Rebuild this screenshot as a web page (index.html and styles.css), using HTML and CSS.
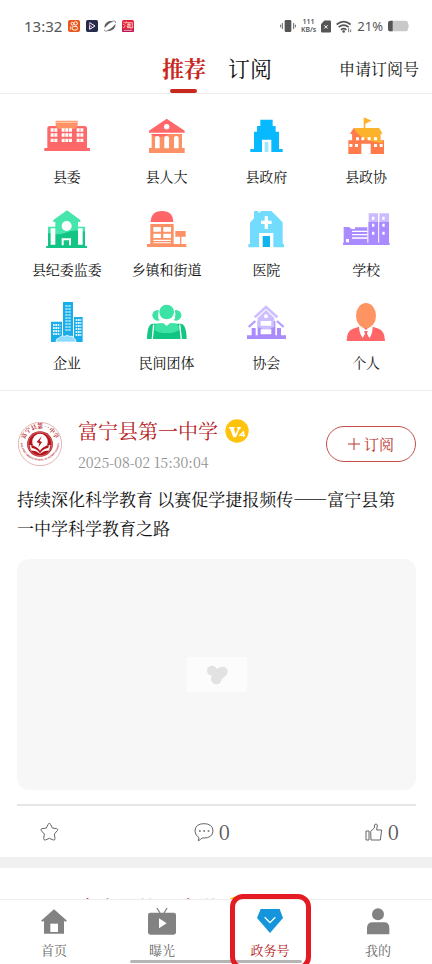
FILE: index.html
```html
<!DOCTYPE html>
<html lang="zh-CN">
<head>
<meta charset="utf-8">
<meta name="viewport" content="width=device-width, initial-scale=1">
<title>政务号</title>
<link rel="stylesheet" href="styles.css">
</head>
<body>
<div class="app">
  <div class="status">
    <div class="status-side">
      <span class="clock">13:32</span>
      <svg class="app-icon" viewBox="0 0 36 36"><rect width="36" height="36" rx="6" fill="#e9561c"/><g fill="none" stroke="#fff" stroke-width="3"><circle cx="13" cy="11" r="4"/><circle cx="23" cy="10" r="5"/><rect x="13" y="19" width="15" height="11" rx="4"/><path d="M11 22l-4-2v8l4-2" stroke-width="2"/></g></svg>
      <svg class="app-icon" viewBox="0 0 36 36"><rect width="36" height="36" rx="5" fill="#262a4d"/><path d="M11 16v12l16-10L11 8" fill="none" stroke="#fff" stroke-width="3"/><path d="M11 7v9l7 4" fill="none" stroke="#e991b5" stroke-width="3"/></svg>
      <svg class="app-icon" viewBox="0 0 36 36"><path d="M2 24C-1 10 16-1 27 5 18 7 9 15 2 24zM34 12c3 14-14 25-25 19 9-2 18-10 25-19z" fill="#5d5d5d"/><path d="M2 29C-1 35 9 34 14 31M22 6c8-5 15-4 12 3" fill="none" stroke="#5d5d5d" stroke-width="2"/></svg>
      <svg class="app-icon" viewBox="0 0 36 36"><rect width="36" height="36" rx="5" fill="#e32337"/><rect y="27" width="36" height="9" rx="4" fill="#bd164c"/><path d="M4 5l4 4M3 12l5 3M4 24l6-7M13 4l-3 7M12 8h19v16h-7M15 13h12M14 18h14M21 9v14M16 18v5h10M5 31h26" fill="none" stroke="#fff" stroke-width="2"/></svg>
    </div>
    <div class="status-side">
      <svg width="16" height="14" viewBox="0 0 48 42"><rect x="14" y="3" width="20" height="36" rx="4" fill="#555"/><path d="M7 12v18M2 17v8M41 12v18M46 17v8" stroke="#666" stroke-width="3"/></svg>
      <span class="speed"><span>111</span><span>KB/s</span></span>
      <svg width="10" height="13" viewBox="0 0 30 38"><path d="M10 1h16q4 0 4 4v28q0 4-4 4H4q-4 0-4-4V12z" fill="#555"/><path d="M10 15l10 10M20 15L10 25" stroke="#fff" stroke-width="3"/></svg>
      <svg width="16" height="13" viewBox="0 0 48 38"><g fill="none" stroke="#555" stroke-width="5"><path d="M2 13q21-17 42 0M8 21q15-12 30 0M15 29q8-7 16 0"/></g><circle cx="23" cy="34" r="4" fill="#555"/><path d="M38 24v12M44 28v8" stroke="#777" stroke-width="3"/></svg>
      <span class="percent">21%</span>
      <svg width="22" height="12" viewBox="0 0 66 36"><rect y="2" width="60" height="32" rx="8" fill="#c9c9c9"/><path d="M14 2v32H8q-8 0-8-8V10q0-8 8-8z" fill="#555"/><path d="M61 10q5 8 0 16z" fill="#c9c9c9"/></svg>
    </div>
  </div>

  <header class="top">
    <nav class="tabs">
      <a class="tab tab-on" href="#recommend">推荐</a>
      <a class="tab" href="#subscribed">订阅</a>
    </nav>
    <a class="apply" href="#apply">申请订阅号</a>
  </header>

  <main class="content">
    <nav class="cats">
      <a class="cat" href="#c1"><svg viewBox="51 24 180 144"><path d="M73 129h9V70q0-7 8-7h103q8 0 8 7v59h9v9H73z" fill="#ff6868"/><path d="M107 47h66v13q-2 13-20 13h-26q-18 0-20-13z" fill="#ff9367"/><path d="M108 52h64" stroke="#ffd0b0" stroke-width="3"/><path d="M92 75h20M125 75h31M170 75h20M92 90h20M125 90h31M170 90h20M92 106h20M125 106h31M170 106h20" stroke="#fff" stroke-width="10" stroke-dasharray="9 2"/></svg><span>县委</span></a>
      <a class="cat" href="#c2"><svg viewBox="351 24 180 144"><path d="M395 87h91v42h8v15H387v-15h8z" fill="#fb9164"/><path d="M387 83v-6l53-36 54 36v6z" fill="#ff6868"/><path d="M395 87h52q-10 8-26 8-17 0-26-5z" fill="#ff6868"/><circle cx="440" cy="65" r="8" fill="#fff"/><path d="M405 130V98q0-5 7-5t7 5v32zM433 130V98q0-5 7-5t7 5v32zM462 130V98q0-5 7-5t7 5v32z" fill="#fff"/></svg><span>县人大</span></a>
      <a class="cat" href="#c3"><svg viewBox="48 24 180 144"><path d="M121 44h37v19h9v17h10v52h11v9h-34v-37h-28v37H91v-9h11V80h9V63h10z" fill="#08b9ff"/><path d="M134 111h11v30h-11z" fill="#9be6ff"/></svg><span>县政府</span></a>
      <a class="cat" href="#c4"><svg viewBox="348 24 180 144"><path d="M397 84v22h-12v41h39v-31h28v31h40v-41h-12V84z" fill="#ff7b4c"/><path d="M391 86l12-17h74l11 17h-6v20q6 4 10 9-27-3-48-9-28-8-42-27l-5 7z" fill="#fcb32b"/><path d="M390 86l11-17q16 28 45 37h-49V86z" fill="#ff7b4c"/><path d="M431 70V38h4l20 9-19 9v14z" fill="#fcb32b"/><g fill="#fff"><path d="M408 97h9v9h-9zM424 97h9v9h-9zM443 97h9v9h-9zM462 97h9v9h-9zM388 117h9v9h-9zM405 117h9v9h-9zM462 117h9v9h-9zM479 117h9v9h-9z"/></g></svg><span>县政协</span></a>

      <a class="cat" href="#c5"><svg viewBox="51 18 180 144"><path d="M84 80h22V66h-6v-6l41-29 40 29v6h-7v14h21v58h6v6H79v-6h5z" fill="#46e5ac"/><path d="M84 99q25 8 51 0 28-12 60-4v43h6v6H79v-6h5z" fill="#13c584"/><path d="M92 85h14v49H92zM174 85h14v49h-14z" fill="#fff"/><circle cx="140" cy="78" r="15" fill="#fff"/><path d="M128 136v-18h22v18" fill="none" stroke="#fff" stroke-width="6"/></svg><span>县纪委监委</span></a>
      <a class="cat" href="#c6"><svg viewBox="351 18 180 144"><path d="M392 66q1-33 34-33t34 33z" fill="#ff6668"/><path d="M391 72h70v60h19v-22h-14V93h31v17h-13v22h15v9H381v-9h10z" fill="#fb9164"/><path d="M400 81h23v14h-23zM430 81h23v14h-23zM400 101h23v13h-23zM430 101h23v13h-23zM400 119h53v4h-53zM400 127h53v3h-53z" fill="#fff"/></svg><span>乡镇和街道</span></a>
      <a class="cat" href="#c7"><svg viewBox="48 18 180 144"><path d="M102 33h13v7l10-7h29l34 34v65h4v10h-32V99h-43v43H85v-10h5V68l12-13z" fill="#72dcff"/><path d="M139 49v38M123 67h32" stroke="#fff" stroke-width="10"/><path d="M128 108h22v33h-22z" fill="#13b4ed"/></svg><span>医院</span></a>
      <a class="cat" href="#c8"><svg viewBox="348 18 180 144"><path d="M371 81h16l8 6h10v-5h37v46h3V66h62v62h2v7H369v-7h2z" fill="#a98bff"/><path d="M446 40h29v26h-29zM478 40h29v26h-29z" fill="#ccbcff"/><path d="M476 40v88" stroke="#fff" stroke-width="3"/><path d="M396 94h46M396 104h46M396 114h46" stroke="#fff" stroke-width="4"/><path d="M378 117h9v10h-9zM456 50h7v9h-7zM487 50h7v9h-7zM456 71h7v9h-7zM487 71h7v9h-7zM456 95h7v9h-7zM487 95h7v9h-7z" fill="#fff"/></svg><span>学校</span></a>

      <a class="cat" href="#c9"><svg viewBox="51 27 180 144"><path d="M93 95h33v61H93zM129 36h30v120h-30zM162 81h26v75h-26z" fill="#18aeea"/><path d="M99 105h22M99 114h22M99 123h22M99 132h22M167 90h17M167 99h17M167 108h17M167 117h17M167 126h17M167 135h17" stroke="#e6f9ff" stroke-width="6" stroke-dasharray="5 2"/><path d="M136 48h16M136 57h16M136 66h16M136 75h16M136 84h16M136 93h16M136 102h16M136 111h16M136 120h16" stroke="#b9edff" stroke-width="5" stroke-dasharray="7 2"/><path d="M108 156q-1-12 10-12 5-9 16-5 7-6 15 0 11-3 12 6 8 2 7 11z" fill="#8ddcff" stroke="#fff" stroke-width="2"/></svg><span>企业</span></a>
      <a class="cat" href="#c10"><svg viewBox="351 27 180 144"><circle cx="413" cy="76" r="16" fill="#3de2a5"/><circle cx="468" cy="76" r="16" fill="#3de2a5"/><path d="M381 147q1-45 17-46h84q17 1 18 46z" fill="#12c583"/><path d="M403 119q0-19 16-19h43q15 0 15 19-9 10-37 10t-37-10z" fill="#3de2a5"/><path d="M415 70q0-27 25-27t26 27l-1 16-25 22-25-22z" fill="#fff"/><circle cx="440" cy="66" r="22" fill="#3de2a5"/><path d="M429 91q11 6 23 0l-12 15z" fill="#fff"/><path d="M401 104l-4 43M479 104l5 43" stroke="#fff" stroke-width="4"/></svg><span>民间团体</span></a>
      <a class="cat" href="#c11"><svg viewBox="48 27 180 144"><path d="M81 136h14v-22h12v22h6V93h53v43h5v-22h12v22h15v11H81z" fill="#a98bff"/><path d="M113 84l25-24 25 24v26q-25 16-50 0z" fill="#cdbeff"/><path d="M104 82l34-31 34 31" fill="none" stroke="#cdbeff" stroke-width="8"/><path d="M86 111l20-18M171 93l20 18" stroke="#b69dff" stroke-width="7"/><circle cx="138" cy="79" r="6" fill="#fff"/><path d="M122 93h32v14h-32zM122 118h32v15h-32z" fill="#fff"/></svg><span>协会</span></a>
      <a class="cat" href="#c12"><svg viewBox="348 27 180 144"><path d="M380 153q0-31 19-37l18-6h41l18 6q18 6 19 37z" fill="#ff6668"/><path d="M417 109l6-3 15 14 14-14 6 3q0 24-10 35l-10-17-10 17q-11-15-11-35z" fill="#fff"/><path d="M432 123h11l-2 8 4 13-7 8-7-8 4-13z" fill="#ff6668"/><ellipse cx="438" cy="77" rx="30" ry="38" fill="#ff9463"/></svg><span>个人</span></a>
    </nav>

    <article class="post">
      <div class="author">
        <svg class="avatar" viewBox="0 0 130 130"><defs><path id="arc-top" d="M24 88A47 47 0 1 1 106 88"/><path id="arc-low" d="M7 56A58 58 0 0 0 123 56"/></defs><circle cx="65" cy="65" r="64" fill="none" stroke="#b5232a" stroke-width="1"/><circle cx="65" cy="65" r="38" fill="#b5151c"/><circle cx="65" cy="65" r="35" fill="none" stroke="#fff" stroke-width="1"/><circle cx="65" cy="58" r="23" fill="#fff"/><path d="M34 68q19 1 31 13 12-12 31-13l-4 16q-16 0-27 10-11-10-27-10z" fill="#fff"/><path d="M38 69q17 2 27 16 10-14 27-16l-3 8q-13 1-24 15-11-14-24-15z" fill="#b5151c"/><path d="M70 42L55 59l8 4-3 12 11-16-7-3z" fill="#b5151c"/><text class="seal-cn"><textPath href="#arc-top" startOffset="50%">富宁县第一中学</textPath></text><text class="seal-en"><textPath href="#arc-low" startOffset="50%">THE FIRST MIDDLE SCHOOL OF FUNING COUNTY</textPath></text></svg>
        <div class="who">
          <h2 class="name">富宁县第一中学 <svg class="badge" viewBox="0 0 72 72"><circle cx="36" cy="36" r="35" fill="#ffc20d"/><path d="M12 24h17v4l-3 1 6 16 7-16-3-1v-4h12v4l-4 1-11 26h-8L15 29l-3-1z" fill="#fff"/><path d="M56 37v17M57 37L45 49h15" fill="none" stroke="#fff" stroke-width="4"/></svg></h2>
          <time class="date">2025-08-02 15:30:04</time>
        </div>
        <button class="follow" type="button"><svg width="12" height="12" viewBox="0 0 12 12"><path d="M6 0v12M0 6h12" stroke="#b8332e"/></svg>订阅</button>
      </div>
      <p class="title">持续深化科学教育 以赛促学捷报频传——富宁县第一中学科学教育之路</p>
      <div class="media"><svg width="60" height="35" viewBox="0 0 180 105"><rect width="180" height="105" fill="#fcfcfc"/><g fill="#e2e2e2"><circle cx="75" cy="41" r="15"/><circle cx="107" cy="44" r="15"/><circle cx="88" cy="66" r="16"/><path d="M78 30l10 6 15-6 12 26-12 12-26-6z"/></g></svg></div>
      <div class="actions">
        <button class="act" type="button" aria-label="收藏"><svg width="19" height="20" viewBox="0 0 57 60"><path d="M28 4q3 0 4 4l5 10 13 2q6 2 2 6l-9 10 2 14q0 5-5 4l-12-5-12 5q-5 1-5-4l2-14-9-10q-4-4 2-6l13-2 5-10q1-4 4-4z"/></svg></button>
        <button class="act" type="button" aria-label="评论"><svg width="20" height="20" viewBox="0 0 60 60"><path d="M15 47Q3 40 3 27 4 5 30 5t27 22q-2 21-27 21h-6q-4 6-11 8z"/><path d="M15 27h5M28 27h5M41 27h5" stroke-width="5"/></svg><span>0</span></button>
        <button class="act" type="button" aria-label="点赞"><svg width="18" height="20" viewBox="0 0 54 60"><path d="M3 27h9v27H3zM17 28l11-10 1-10q6-5 8 1l-2 15h15l-4 30H18z"/></svg><span>0</span></button>
      </div>
    </article>

    <article class="post">
      <div class="author">
        <svg class="avatar" viewBox="0 0 130 130"><circle cx="65" cy="65" r="64" fill="none" stroke="#b5232a"/></svg>
        <div class="who">
          <h2 class="name">富宁县第一中学 <svg class="badge" viewBox="0 0 72 72"><circle cx="36" cy="36" r="35" fill="#ffc20d"/></svg></h2>
        </div>
      </div>
    </article>
  </main>

  <nav class="bottom">
    <a class="item" href="#home"><svg viewBox="0 0 90 84"><path d="M6 41L45 7l39 34-5 3-4-3v39H15V41l-4 3z" fill="#828282"/><path d="M34 50h23v25H34z" fill="#fff"/></svg><span>首页</span></a>
    <a class="item" href="#expose"><svg viewBox="0 0 90 84"><rect x="3" y="17" width="84" height="66" rx="7" fill="#828282"/><path d="M39 18L30 3M51 18l9-15" stroke="#828282" stroke-width="4"/><path d="M36 34v30l23-15z" fill="#fff"/></svg><span>曝光</span></a>
    <a class="item item-on" href="#gov"><svg viewBox="0 0 90 84"><path d="M17 6h57l10 27-39 45L6 33z" fill="#1595dc"/><path d="M29 31l16 16 16-16" fill="none" stroke="#fff" stroke-width="4"/></svg><span>政务号</span></a>
    <a class="item" href="#me"><svg viewBox="0 0 90 84"><circle cx="45" cy="22" r="18" fill="#828282"/><path d="M12 82V63q0-17 17-17h34q16 0 16 17v19z" fill="#828282"/></svg><span>我的</span></a>
    <div class="grip"></div>
    <div class="mark"></div>
  </nav>
</div>
</body>
</html>
```

FILE: styles.css
```css
* { box-sizing: border-box; }
body {
  margin: 0;
  background: #fff;
  color: #111;
  font-family: "Noto Serif CJK SC", "Noto Serif SC", "Source Han Serif SC", "Liberation Serif", "Noto Sans CJK SC", serif;
}
a { color: inherit; text-decoration: none; }
button { font: inherit; color: inherit; background: none; border: 0; padding: 0; }
svg { display: block; flex: none; }

.app { height: 100vh; display: flex; flex-direction: column; overflow: hidden; }

.status {
  flex: none;
  height: 48px;
  padding: 4px 22px 0 24px;
  display: flex;
  justify-content: space-between;
  align-items: center;
  font-family: "Noto Sans", sans-serif;
  color: #555;
}
.status-side { display: flex; align-items: center; gap: 5px; }
.clock { font-size: 15px; line-height: 20px; margin-right: 1px; }
.app-icon { width: 12px; height: 12px; margin-right: 1px; }
.speed { display: flex; flex-direction: column; align-items: center; font-size: 7px; line-height: 8px; font-weight: 600; }
.percent { font-size: 13px; line-height: 16px; }

.top {
  flex: none;
  height: 46px;
  padding-right: 13px;
  display: grid;
  grid-template-columns: 1fr auto 1fr;
  align-items: center;
  border-bottom: 1px solid #ededed;
}
.tabs { grid-column: 2; display: flex; gap: 22px; align-self: stretch; padding-left: 15px; }
.tab {
  display: flex;
  flex-direction: column;
  align-items: center;
  justify-content: space-between;
  font-size: 22px;
  line-height: 40px;
}
.tab-on { color: #c9271e; font-weight: 700; }
.tab-on::after { content: ""; width: 27px; height: 4px; border-radius: 2px; background: #c9271e; }
.apply { justify-self: end; font-size: 16px; line-height: 24px; margin-bottom: 3px; }

.content { flex: 1; min-height: 0; overflow: hidden; }

.cats {
  display: grid;
  grid-template-columns: repeat(4, 1fr);
  row-gap: 20px;
  padding: 19px 16px 18px 17px;
  border-bottom: 1px solid #ededed;
}
.cat { display: flex; flex-direction: column; align-items: center; gap: 5px; font-size: 14px; line-height: 20px; }
.cat svg { width: 60px; height: 48px; }

.post { padding: 26px 16px 0 17px; border-bottom: 11px solid #f0f0f0; }
.author { display: flex; align-items: center; gap: 16px; height: 54px; }
.avatar { width: 44px; height: 44px; margin-left: 1px; }
.seal-cn { font-size: 17px; fill: #b5232a; font-weight: 700; text-anchor: middle; }
.seal-en { font-family: "Liberation Sans", sans-serif; font-size: 7px; fill: #b5232a; font-weight: 700; text-anchor: middle; }
.who { flex: 1; display: flex; flex-direction: column; gap: 7px; align-self: flex-start; }
.name { margin: 0; display: flex; align-items: center; gap: 7px; font-size: 20px; font-weight: 400; line-height: 28px; color: #b5201c; }
.badge { width: 24px; height: 24px; }
.date { font-size: 14px; line-height: 20px; color: #929292; }
.follow {
  width: 90px;
  height: 36px;
  border: 1px solid #c1504b;
  border-radius: 18px;
  display: flex;
  align-items: center;
  justify-content: center;
  gap: 4px;
  font-size: 15px;
  line-height: 20px;
  color: #b8332e;
}
.title { margin: 13px 0 0; padding-right: 8px; font-size: 17px; line-height: 29px; }
.media {
  height: 231px;
  margin-top: 17px;
  border-radius: 12px;
  background: #f7f7f7;
  display: flex;
  align-items: center;
  justify-content: center;
}
.actions {
  margin-top: 14px;
  height: 53px;
  padding: 0 17px 0 23px;
  border-top: 2px solid #e6e6e6;
  display: flex;
  align-items: center;
  justify-content: space-between;
}
.act { display: flex; align-items: center; gap: 5px; font-size: 20px; line-height: 28px; color: #555; }
.act svg { fill: none; stroke: #666; stroke-width: 3; }

.bottom {
  flex: none;
  position: relative;
  height: 65px;
  display: grid;
  grid-template-columns: repeat(4, 1fr);
  border-top: 1px solid #ededed;
  background: #fff;
}
.item { display: flex; flex-direction: column; align-items: center; gap: 5px; padding-top: 7px; font-size: 13px; line-height: 20px; color: #666; }
.item svg { width: 30px; height: 28px; }
.item-on { color: #b5201c; }
.grip { position: absolute; left: 30%; right: 30%; bottom: 1px; height: 3px; border-radius: 2px; background: #b5b5b5; }
.mark { position: absolute; left: calc(62.5% - 40px); top: -6px; width: 81px; height: 76px; border: 5px solid #e51b23; border-radius: 13px; }
```
